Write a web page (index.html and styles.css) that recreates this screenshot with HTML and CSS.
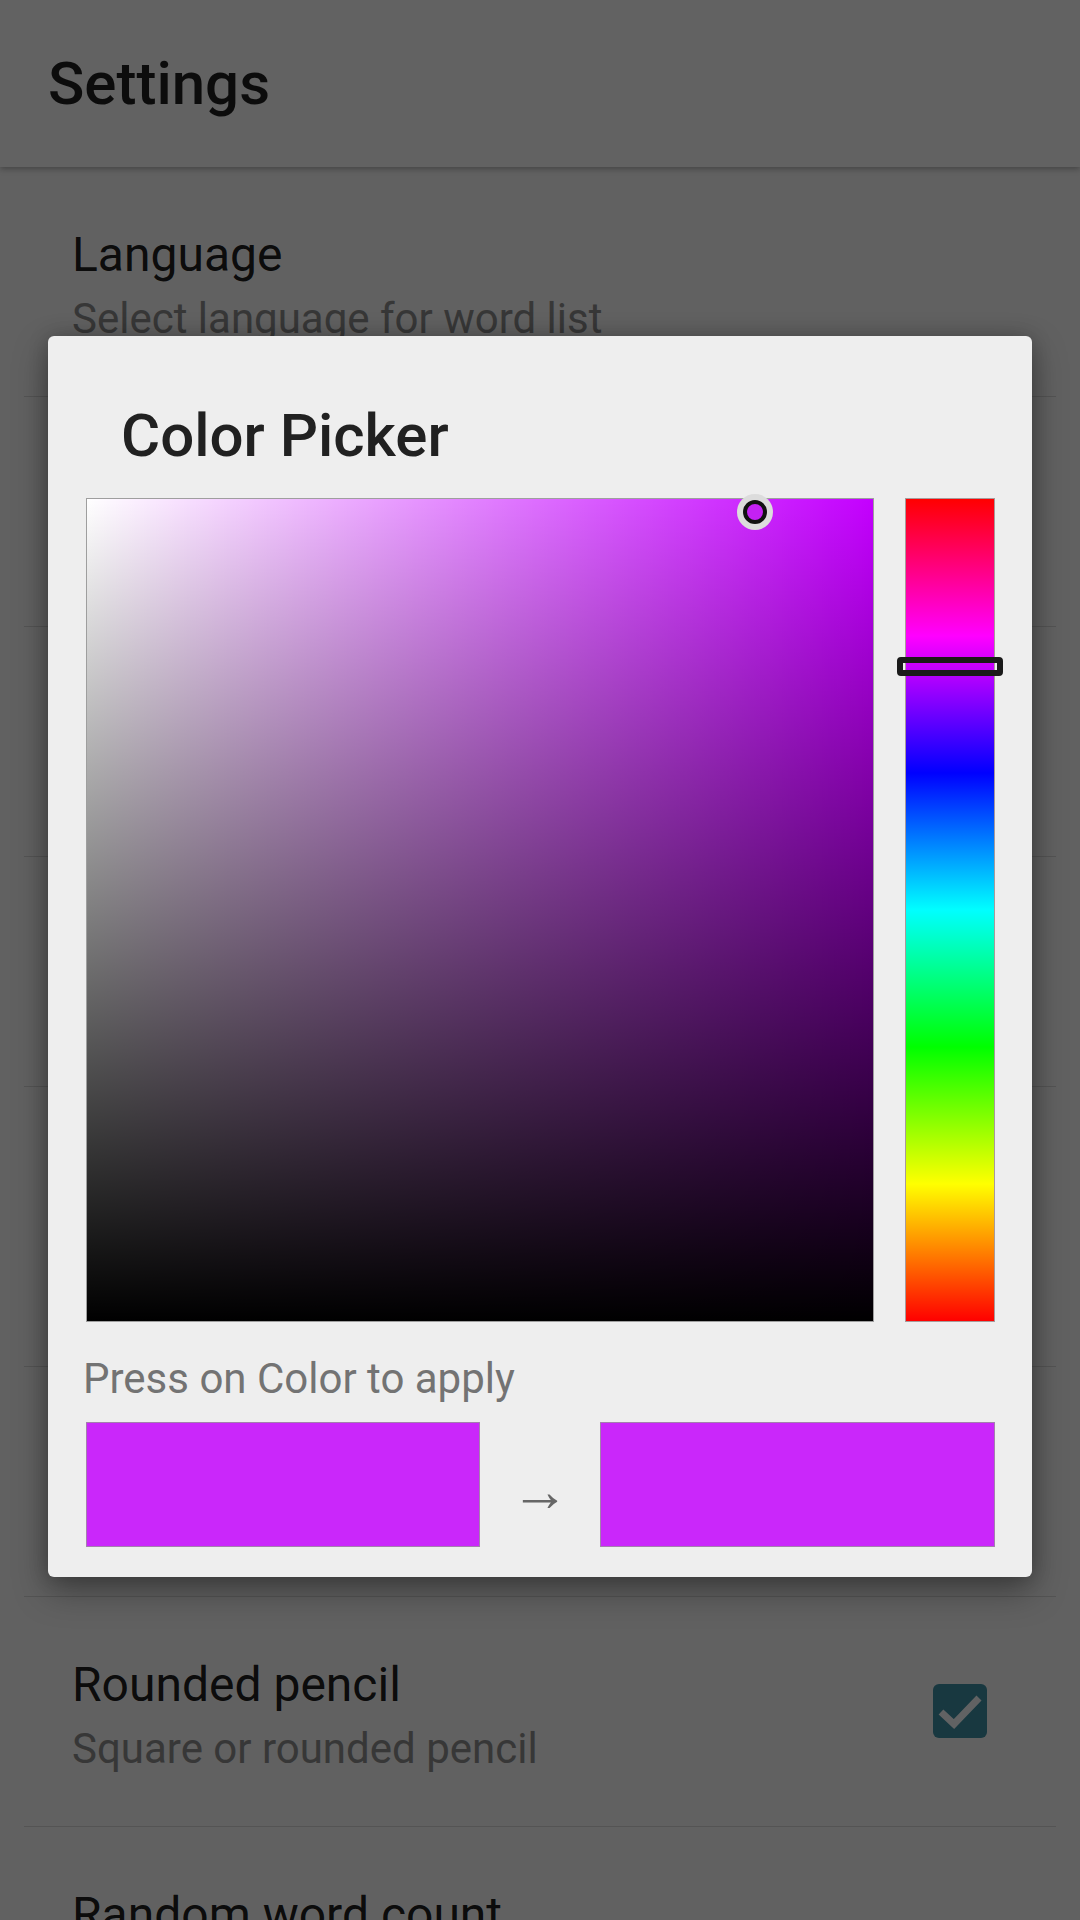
FILE: index.html
```html
<!DOCTYPE html>
<html lang="en">
<head>
<meta charset="utf-8">
<title>Settings</title>
<link rel="stylesheet" href="styles.css">
</head>
<body>
  <div class="app">
    <header class="appbar">
      <h1 class="appbar-title">Settings</h1>
    </header>
    <ul class="prefs">
      <li class="pref">
        <div class="pref-text">
          <div class="pref-title">Language</div>
          <div class="pref-summary">Select language for word list</div>
        </div>
      </li>
      <li class="pref pref--covered"></li>
      <li class="pref pref--covered"></li>
      <li class="pref pref--covered"></li>
      <li class="pref pref--covered pref--tall"></li>
      <li class="pref pref--covered"></li>
      <li class="pref">
        <div class="pref-text">
          <div class="pref-title">Rounded pencil</div>
          <div class="pref-summary">Square or rounded pencil</div>
        </div>
        <svg class="checkbox" width="54" height="54" viewBox="0 0 54 54" aria-hidden="true">
          <rect x="0" y="0" width="54" height="54" rx="6" ry="6" fill="#3c8ca0"/>
          <polyline points="8,28 21,40 46,14" fill="none" stroke="#f2f6f8" stroke-width="7"/>
        </svg>
      </li>
      <li class="pref">
        <div class="pref-text">
          <div class="pref-title">Random word count</div>
          <div class="pref-summary">Number of random words</div>
        </div>
      </li>
    </ul>
  </div>

  <div class="scrim"></div>

  <div class="dialog" role="dialog" aria-label="Color Picker">
    <h2 class="dialog-title">Color Picker</h2>
    <div class="picker">
      <div class="sv">
        <svg class="sv-thumb" width="38" height="38" viewBox="0 0 38 38" aria-hidden="true">
          <circle cx="19" cy="19" r="18" fill="#dcdcdc"/>
          <circle cx="19" cy="19" r="10" fill="#c421f3" stroke="#111" stroke-width="4"/>
        </svg>
      </div>
      <div class="hue">
        <div class="hue-thumb"></div>
      </div>
    </div>
    <p class="hint">Press on Color to apply</p>
    <div class="swatches">
      <div class="swatch"></div>
      <span class="arrow">→</span>
      <div class="swatch"></div>
    </div>
  </div>
</body>
</html>
```

FILE: styles.css
```css
* {
  box-sizing: border-box;
  margin: 0;
  padding: 0;
}

html, body {
  width: 1080px;
  height: 1920px;
  overflow: hidden;
}

body {
  position: relative;
  font-family: Roboto, "Noto Sans", "Liberation Sans", sans-serif;
  background: #f2f2f2;
}

.appbar {
  position: relative;
  z-index: 1;
  height: 167px;
  display: flex;
  align-items: center;
  padding-left: 48px;
  background: #f5f5f5;
  box-shadow: 0 2px 6px rgba(0, 0, 0, 0.3);
}

.appbar-title {
  font-size: 60px;
  font-weight: 500;
  line-height: 72px;
  color: rgba(0, 0, 0, 0.87);
}

.prefs {
  list-style: none;
}

.pref {
  display: flex;
  margin: 0 24px;
  padding: 60px 48px 49px;
  border-bottom: 1px solid #d2d2d2;
}

.pref--covered {
  height: 230px;
}

.pref--tall {
  height: 280px;
}

.pref-text {
  flex: 1;
}

.pref-title {
  font-size: 48px;
  line-height: 56px;
  color: rgba(0, 0, 0, 0.9);
}

.pref-summary {
  margin-top: 8px;
  font-size: 42px;
  line-height: 56px;
  color: #8a8a8a;
}

.checkbox {
  flex: none;
  align-self: center;
  margin-right: 21px;
  margin-bottom: 12px;
}

.scrim {
  position: absolute;
  inset: 0;
  z-index: 2;
  background: rgba(0, 0, 0, 0.6);
}

.dialog {
  position: absolute;
  z-index: 3;
  top: 336px;
  left: 48px;
  width: 984px;
  padding: 64px 0 30px;
  background: #eeeeee;
  border-radius: 6px;
  box-shadow: 0 14px 34px rgba(0, 0, 0, 0.35), 0 0 20px rgba(0, 0, 0, 0.2);
}

.dialog-title {
  padding-left: 73px;
  font-size: 60px;
  font-weight: 500;
  line-height: 72px;
  color: #212121;
}

.picker {
  display: flex;
  gap: 31px;
  height: 824px;
  margin-top: 26px;
  padding: 0 37px 0 38px;
}

.sv {
  position: relative;
  width: 788px;
  border: 1px solid #9e9e9e;
  background:
    linear-gradient(to top, #000, rgba(0, 0, 0, 0)),
    linear-gradient(to right, #fff, rgba(255, 255, 255, 0)),
    #c400ff;
}

.sv-thumb {
  position: absolute;
  left: 649px;
  top: -6px;
}

.hue {
  position: relative;
  width: 90px;
  border: 1px solid #a89a9a;
  background: linear-gradient(to bottom, #ff0000, #ff00ff, #0000ff, #00ffff, #00ff00, #ffff00, #ff0000);
}

.hue-thumb {
  position: absolute;
  left: -9px;
  top: 158px;
  width: 106px;
  height: 19px;
  border: 6px solid #1a1a1a;
  border-radius: 4px;
}

.hint {
  margin-top: 32px;
  padding-left: 35px;
  font-size: 42px;
  line-height: 50px;
  color: #737373;
}

.swatches {
  display: grid;
  grid-template-columns: 394px 1fr 395px;
  align-items: center;
  height: 125px;
  margin-top: 18px;
  padding: 0 37px 0 38px;
}

.swatch {
  height: 125px;
  background: #ca27fa;
  border: 1px solid #a47fae;
}

.arrow {
  padding-top: 12px;
  text-align: center;
  font-size: 58px;
  line-height: 1;
  color: #666666;
}
```
